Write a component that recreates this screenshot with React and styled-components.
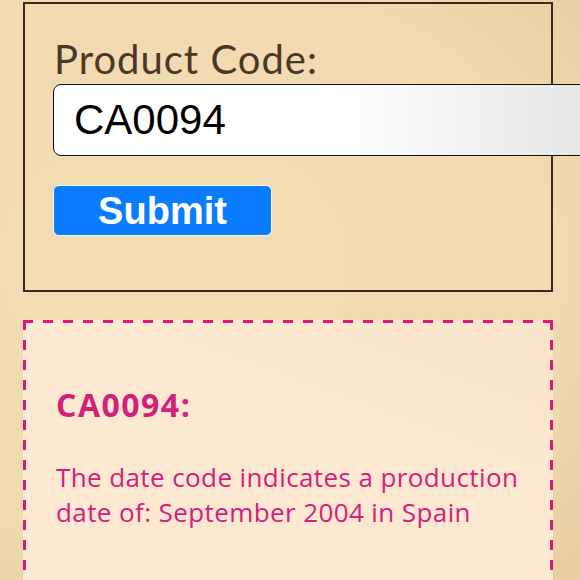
import styled, { createGlobalStyle } from 'styled-components'

const GlobalStyle = createGlobalStyle`
    html, body {
        margin: 0;
        padding: 0;
        overflow: hidden;
    }

    body {
        min-height: 580px;
        background: radial-gradient(ellipse 120% 90% at 30% 45%, #f3ddb5 0%, #f1dab0 55%, #e2c697 100%);
        font-family: Lato, "Noto Sans", sans-serif;
    }
`

const Page = styled.div`
    width: 580px;
    height: 580px;
    padding: 2px 0 0 23px;
    box-sizing: border-box;
    display: flex;
    flex-direction: column;
    gap: 28px;
`

const FormBox = styled.form`
    width: 530px;
    box-sizing: border-box;
    border: 2px solid #3a2b1e;
    padding: 34px 0 54px 28px;
    display: flex;
    flex-direction: column;
    align-items: flex-start;
`

const Label = styled.label`
    font-family: Lato, sans-serif;
    font-size: 40px;
    letter-spacing: 1px;
    line-height: 42px;
    color: #4a3826;
    margin: 0 0 4px 1px;
`

const CodeInput = styled.input`
    width: 540px;
    height: 72px;
    box-sizing: border-box;
    border: 1.5px solid #111;
    border-radius: 8px;
    padding: 0 20px;
    font-family: "Liberation Sans", Arial, sans-serif;
    font-size: 42px;
    color: #000;
    background: linear-gradient(90deg, #fff 0%, #fff 52%, #e6e6e6 100%);
    outline: none;
    margin-bottom: 29px;
`

const SubmitButton = styled.button`
    width: 219px;
    height: 51px;
    border: 1px solid #f4f8ff;
    border-radius: 6px;
    background: #0a7cff;
    color: #fff;
    font-family: "Liberation Sans", Arial, sans-serif;
    font-weight: bold;
    font-size: 38px;
    line-height: 1;
    padding: 0;
`

const pink = '#d61c78'

const ResultBox = styled.div`
    width: 530px;
    height: 320px;
    box-sizing: border-box;
    background:
        repeating-linear-gradient(90deg, ${pink} 0 10px, transparent 10px 20px) top left / 100% 3px no-repeat,
        repeating-linear-gradient(180deg, ${pink} 0 10px, transparent 10px 20px) top left / 3px 100% no-repeat,
        repeating-linear-gradient(180deg, ${pink} 0 10px, transparent 10px 20px) top right / 3px 100% no-repeat,
        linear-gradient(200deg, #f9e3c8 0%, #fde9d1 35%, #fde9d1 100%);
    padding: 65px 0 0 33px;
    color: #d4207c;
`

const Heading = styled.h2`
    margin: 0 0 35px;
    font-family: "Open Sans", sans-serif;
    font-weight: 700;
    font-size: 32px;
    letter-spacing: 1.5px;
    line-height: 40px;
`

const Text = styled.p`
    margin: 0;
    width: 480px;
    font-family: "Open Sans", sans-serif;
    font-size: 26px;
    letter-spacing: 0.4px;
    line-height: 35px;
`

export default function App() {
    return (
        <>
            <GlobalStyle />
            <Page>
                <FormBox onSubmit={(e) => e.preventDefault()}>
                    <Label htmlFor="code">Product Code:</Label>
                    <CodeInput id="code" defaultValue="CA0094" />
                    <SubmitButton type="submit">Submit</SubmitButton>
                </FormBox>
                <ResultBox>
                    <Heading>CA0094:</Heading>
                    <Text>The date code indicates a production date of: September 2004 in Spain</Text>
                </ResultBox>
            </Page>
        </>
    )
}
